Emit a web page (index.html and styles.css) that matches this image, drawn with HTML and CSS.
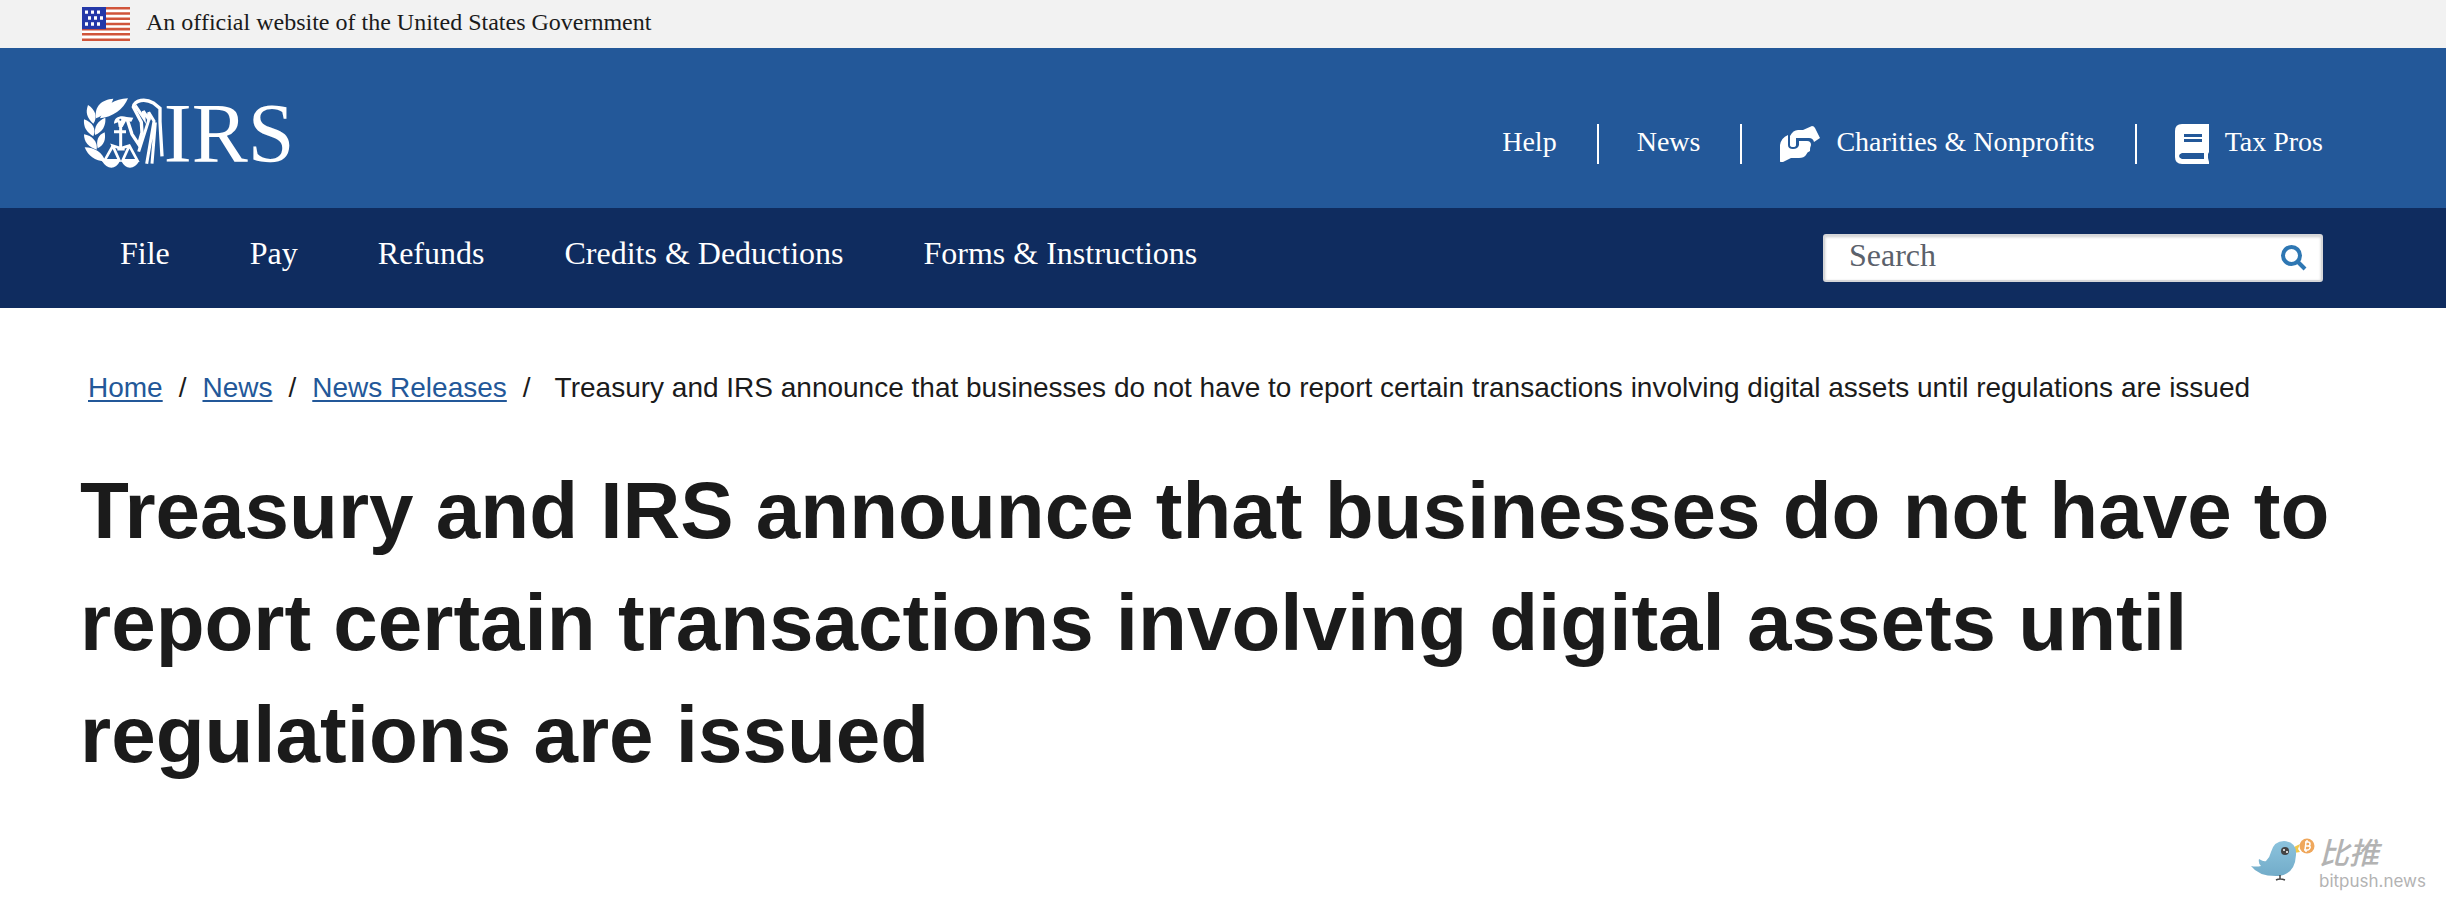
FILE: index.html
```html
<!DOCTYPE html>
<html lang="en">
<head>
    <meta charset="UTF-8">
    <meta name="viewport" content="width=device-width, initial-scale=1.0">
    <title>Treasury and IRS announce that businesses do not have to report certain transactions</title>
    <link rel="stylesheet" href="styles.css">
</head>
<body>
    <!-- Government banner -->
    <div class="gov-banner">
        <svg class="flag" viewBox="0 0 48 40" preserveAspectRatio="none" aria-hidden="true">
            <rect width="48" height="40" fill="#fff"/>
            <path d="M0 1.500h48M0 7.700h48M0 13.900h48M0 20h48M0 26h48M0 32h48M0 38.500h48" stroke="#d0543a" stroke-width="3"/>
            <rect width="24" height="26" fill="#2438a8"/>
            <path d="M3 6h3M9 6h3M15 6h3M6 13h3M12 13h3M18 13h3M3 20h3M9 20h3M15 20h3" stroke="#fff" stroke-width="4"/>
        </svg>
        <span>An official website of the United States Government</span>
    </div>

    <!-- Logo and top links -->
    <header class="header">
        <a class="logo" href="#" aria-label="IRS home">
            <svg viewBox="36 -12 660 312" aria-hidden="true">
                <g fill="#fff">
                    <path d="M54 60C46 82 50 98 70 116C84 96 76 74 54 60Z"/>
                    <path d="M42 103C40 128 50 142 70 154C80 132 68 112 42 103Z"/>
                    <path d="M42 148C42 172 56 186 80 194C84 170 66 152 42 148Z"/>
                    <path d="M44 187C54 212 74 228 106 230C98 202 74 188 44 187Z"/>
                    <path d="M130 41C96 44 72 62 78 100C104 90 120 70 130 41Z"/>
                    <path d="M174 40C134 42 104 58 90 100C128 96 160 74 174 40Z"/>
                    <path d="M106 98C82 108 72 124 75 150C98 140 108 122 106 98Z"/>
                    <path d="M104 142C84 150 78 166 83 190C102 180 108 164 104 142Z"/>
                </g>
                <g fill="none" stroke="#fff" stroke-width="9">
                    <path d="M132 140H168M152 124V192M142 192H164"/>
                    <path d="M130 180L104 226H148L128 182L152 190L178 182L202 226H158L178 182" stroke-width="8"/>
                    <path d="M172 104L186 148L206 178L216 142L214 112L190 66C194 44 226 40 250 54L270 70V110L276 214" stroke-width="10"/>
                    <path d="M196 62L222 100L220 78L238 106L236 82L252 108L230 236M236 106L206 200M256 112L246 236"/>
                </g>
                <path d="M132 116C132 96 152 90 170 96L190 98L184 110L168 108L158 126H146L144 112Z" fill="#fff"/>
                <circle cx="151" cy="104" r="3" fill="#235899"/>
                <path d="M96 228H150Q140 248 124 248T96 228ZM154 228H208Q196 248 180 248T154 228Z" fill="#fff"/>
                <text class="logo-text" x="281" y="231">IRS</text>
            </svg>
        </a>
        <nav class="top-links" aria-label="Secondary">
            <a href="#"><span>Help</span></a>
            <a href="#"><span>News</span></a>
            <a href="#">
                <svg class="hand-icon" viewBox="0 0 40 36" aria-hidden="true">
                    <path fill="#fff" d="M0 35V19Q1 12 8 9V19Q8 23 13 23T19 19V15H27Q31 15 31 19Q30 21 30 25Q27 26 26 29Q24 32 19 32H11L3 36Q0 37 0 35Z"/>
                    <path fill="#fff" d="M10 10Q13 4 18 4H23L32 0Q34 0 35 2L40 12L34 16Q33 12 29 12H16V19Q16 21 13 21T10 19Z"/>
                </svg>
                <span>Charities &amp; Nonprofits</span>
            </a>
            <a href="#">
                <svg class="book-icon" viewBox="0 0 34 40" aria-hidden="true">
                    <path fill="#fff" d="M7 0H34V28L33 30V34L34 38V40H7Q0 40 0 33V7Q0 0 7 0Z"/>
                    <path fill="#235899" d="M9 10H27V13H9ZM9 15H27V18H9ZM7 29H29V35H7Q4 34 4 32T7 29Z"/>
                </svg>
                <span>Tax Pros</span>
            </a>
        </nav>
    </header>

    <!-- Main menu -->
    <div class="menu-bar">
        <nav class="menu" aria-label="Main">
            <a href="#">File</a>
            <a href="#">Pay</a>
            <a href="#">Refunds</a>
            <a href="#">Credits &amp; Deductions</a>
            <a href="#">Forms &amp; Instructions</a>
        </nav>
        <form class="search">
            <input type="search" placeholder="Search" aria-label="Search">
            <button type="submit" aria-label="Submit search">
                <svg viewBox="0 0 26 26" aria-hidden="true">
                    <circle cx="10.500" cy="10.500" r="8.500"/>
                    <path d="M17 17L24 24"/>
                </svg>
            </button>
        </form>
    </div>

    <main class="content">
        <nav class="breadcrumb" aria-label="Breadcrumb">
            <a href="#">Home</a>
            <span>/</span>
            <a href="#">News</a>
            <span>/</span>
            <a href="#">News Releases</a>
            <span>/</span>
            <span class="current">Treasury and IRS announce that businesses do not have to report certain transactions involving digital assets until regulations are issued</span>
        </nav>
        <h1>Treasury and IRS announce that businesses do not have to report certain transactions involving digital assets until regulations are issued</h1>
    </main>

    <!-- Bitpush watermark -->
    <div class="watermark">
        <svg viewBox="0 0 66 48" aria-hidden="true">
            <defs>
                <linearGradient id="bird" x1="0" y1="0" x2="0" y2="1">
                    <stop offset="0" stop-color="#8cc3dd"/>
                    <stop offset="1" stop-color="#72acc9"/>
                </linearGradient>
            </defs>
            <path d="M44 9L50 6L48 11L50 14L44 15Z" fill="#f2c84b"/>
            <path d="M1 28Q6 29 11 28Q8 25 9 21Q14 24 16 23Q20 19 21 14Q24 3 34 3Q47 4 46 17Q45 36 29 38Q9 39 1 28Z" fill="url(#bird)"/>
            <circle cx="35" cy="13" r="4" fill="#444"/>
            <circle cx="34" cy="12" r="1" fill="#fff"/>
            <circle cx="37" cy="14" r="1" fill="#fff"/>
            <path d="M30 37V41M26 42Q30 40 35 42" fill="none" stroke="#444" stroke-width="1.500"/>
            <circle cx="57" cy="8" r="7.500" fill="#efa75c"/>
            <path d="M55 4H58Q60 4 60 6T58 8H55M58 8Q61 8 60 10T58 12H54M56 4L55 12M57 2V4M56 12V14" fill="none" stroke="#fff" stroke-width="1.500"/>
        </svg>
        <div class="watermark-text">
            <span class="watermark-name">比推</span>
            <span class="watermark-url">bitpush.news</span>
        </div>
    </div>
</body>
</html>
```
FILE: styles.css
```css
* {
    box-sizing: border-box;
}
body {
    margin: 0;
    min-height: 100vh;
    position: relative;
    background-color: #fff;
    color: #1b1b1b;
    font-family: "Liberation Sans", Arial, sans-serif;
}
a {
    color: #235899;
}
.gov-banner,
.header,
.menu-bar {
    display: flex;
    align-items: center;
    padding: 0 123px 0 82px;
    font-family: "Liberation Serif", "Times New Roman", serif;
}
.gov-banner {
    height: 48px;
    gap: 16px;
    padding-bottom: 4px;
    background-color: #f2f2f2;
    font-size: 24px;
}
.flag {
    width: 48px;
    height: 34px;
    margin-top: 3px;
}
.header {
    height: 160px;
    justify-content: space-between;
    background-color: #235899;
}
.logo svg {
    display: block;
    width: 220px;
    height: 104px;
    margin-top: 10px;
}
.logo-text {
    fill: #fff;
    font-size: 252px;
}
.top-links {
    display: flex;
    align-items: center;
    margin-top: 32px;
}
.top-links a {
    display: flex;
    align-items: center;
    gap: 16px;
    height: 40px;
    padding: 0 40px 0 38px;
    border-right: 2px solid #fff;
    color: #fff;
    font-size: 28px;
    text-decoration: none;
}
.top-links span {
    padding-bottom: 4px;
}
.top-links a:last-child {
    padding-right: 0;
    border-right: none;
}
.hand-icon {
    width: 40px;
    height: 36px;
}
.book-icon {
    width: 34px;
    height: 40px;
}
.menu-bar {
    height: 100px;
    justify-content: space-between;
    background-color: #0f2c5f;
}
.menu {
    display: flex;
    gap: 80px;
    padding: 0 0 10px 38px;
}
.menu a {
    color: #fff;
    font-size: 32px;
    text-decoration: none;
}
.search {
    display: flex;
    width: 500px;
    height: 48px;
    border: 2px solid #d6d7d9;
    border-radius: 3px;
    background-color: #fff;
    box-shadow: inset 0 1px 3px rgba(0, 0, 0, 0.2);
}
.search input {
    flex: 1;
    min-width: 0;
    padding: 0 0 6px 24px;
    border: none;
    background: none;
    font-family: inherit;
    font-size: 32px;
}
.search input::placeholder {
    color: #5b616b;
}
.search button {
    width: 40px;
    padding: 0;
    border: none;
    background: none;
}
.search svg {
    display: block;
    width: 26px;
    height: 26px;
    fill: none;
    stroke: #2e77b3;
    stroke-width: 4;
}
.content {
    padding: 60px 80px;
}
.breadcrumb {
    display: flex;
    gap: 16px;
    padding-left: 8px;
    font-size: 28px;
    line-height: 40px;
}
.breadcrumb a {
    text-underline-offset: 3px;
}
.breadcrumb .current {
    padding-left: 8px;
}
h1 {
    margin: 47px 0 0;
    font-size: 80px;
    line-height: 112px;
}
.watermark {
    position: absolute;
    right: 20px;
    bottom: 16px;
    display: flex;
    gap: 3px;
    color: #b3b3b3;
}
.watermark svg {
    width: 66px;
    height: 48px;
}
.watermark-text {
    display: flex;
    flex-direction: column;
}
.watermark-name {
    font-family: "Liberation Sans", "Noto Sans CJK SC", sans-serif;
    font-size: 30px;
    font-style: italic;
    font-weight: 500;
    line-height: 32px;
}
.watermark-url {
    font-family: Inter, sans-serif;
    font-size: 17px;
    line-height: 22px;
}
```
